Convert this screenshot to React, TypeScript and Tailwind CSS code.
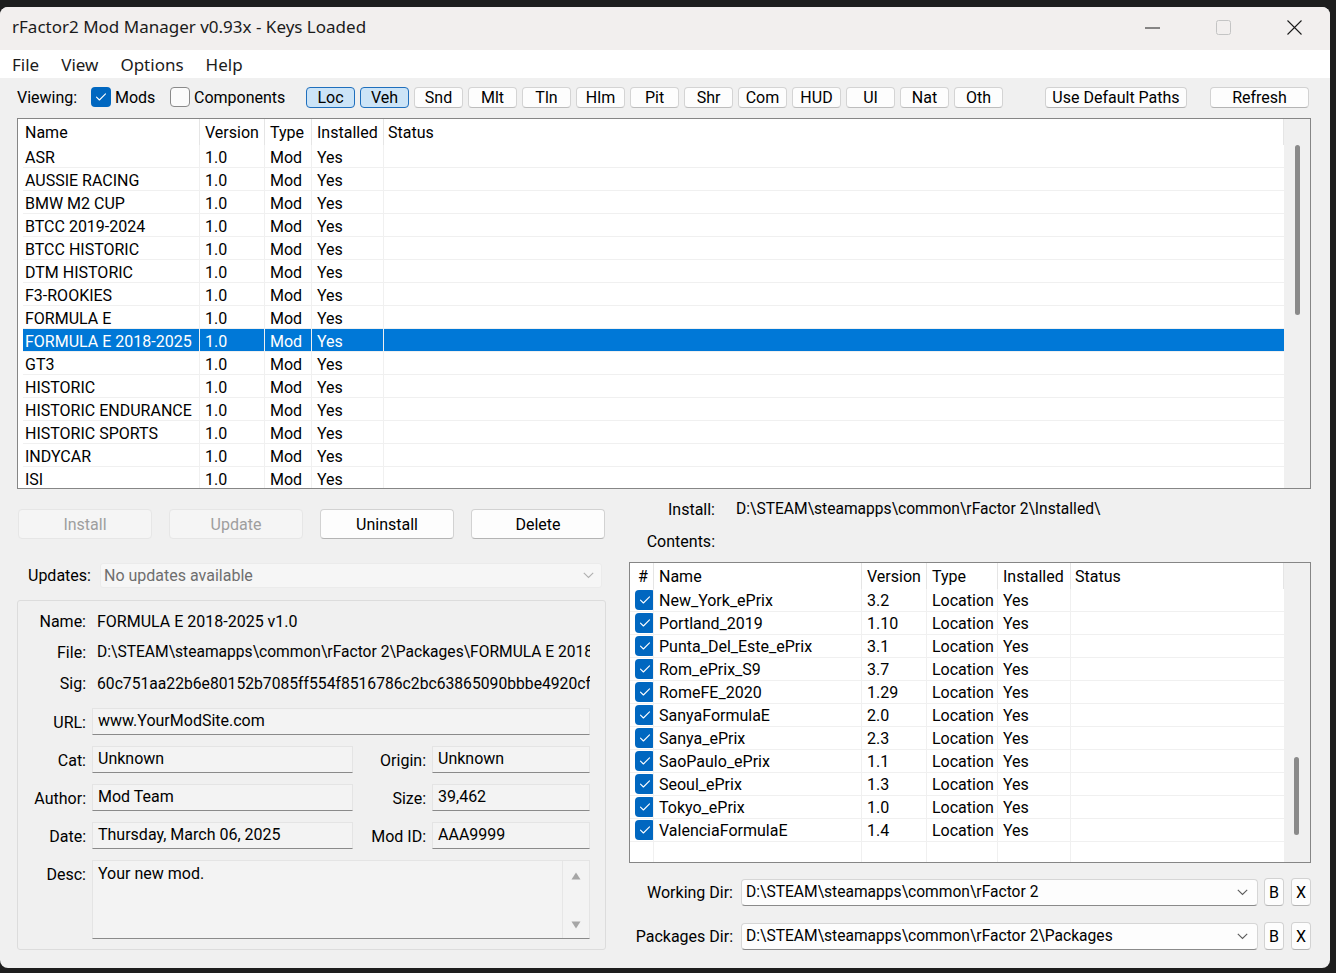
import React from "react";

const mods = [
  "ASR",
  "AUSSIE RACING",
  "BMW M2 CUP",
  "BTCC 2019-2024",
  "BTCC HISTORIC",
  "DTM HISTORIC",
  "F3-ROOKIES",
  "FORMULA E",
  "FORMULA E 2018-2025",
  "GT3",
  "HISTORIC",
  "HISTORIC ENDURANCE",
  "HISTORIC SPORTS",
  "INDYCAR",
  "ISI",
];
const selectedMod = "FORMULA E 2018-2025";

const contents: [string, string][] = [
  ["New_York_ePrix", "3.2"],
  ["Portland_2019", "1.10"],
  ["Punta_Del_Este_ePrix", "3.1"],
  ["Rom_ePrix_S9", "3.7"],
  ["RomeFE_2020", "1.29"],
  ["SanyaFormulaE", "2.0"],
  ["Sanya_ePrix", "2.3"],
  ["SaoPaulo_ePrix", "1.1"],
  ["Seoul_ePrix", "1.3"],
  ["Tokyo_ePrix", "1.0"],
  ["ValenciaFormulaE", "1.4"],
];

const filters = ["Loc", "Veh", "Snd", "Mlt", "Tln", "Hlm", "Pit", "Shr", "Com", "HUD", "UI", "Nat", "Oth"];
const activeFilters = ["Loc", "Veh"];

function Check({ size = 20 }: { size?: number }) {
  return (
    <span
      className="flex shrink-0 items-center justify-center rounded-[4px] bg-[#0067c0]"
      style={{ width: size, height: size }}
    >
      <svg width="12" height="10" viewBox="0 0 12 10" fill="none">
        <path d="M1.5 5.2 4.4 8 10.5 1.8" stroke="white" strokeWidth="1.1" strokeLinecap="round" strokeLinejoin="round" />
      </svg>
    </span>
  );
}

function Chevron({ color = "#5c5c5c" }: { color?: string }) {
  return (
    <svg width="11" height="7" viewBox="0 0 11 7" fill="none">
      <path d="M0.8 0.8 5.5 5.5 10.2 0.8" stroke={color} strokeWidth="1.1" />
    </svg>
  );
}

function Button({ label, disabled, className = "" }: { label: string; disabled?: boolean; className?: string }) {
  return (
    <div
      className={`flex items-center justify-center rounded-[4px] border pt-[2px] ${
        disabled
          ? "border-[#e6e6e6] bg-[#f5f5f5] text-[#9e9e9e]"
          : "border-[#d2d2d2] border-b-[#b4b4b4] bg-[#fdfdfd] text-black"
      } ${className}`}
    >
      {label}
    </div>
  );
}

function Field({ value, className = "" }: { value: string; className?: string }) {
  return (
    <div
      className={`flex h-[27px] shrink-0 items-center border border-[#e4e4e4] border-b-[#8a8a8a] bg-[#f3f3f3] pb-[1px] pl-[5px] ${className}`}
    >
      {value}
    </div>
  );
}

function TitleBar() {
  return (
    <div className="flex h-[43px] shrink-0 items-center bg-[#f2efee]">
      <span className="pb-[3px] pl-[12px] font-['Noto_Sans',sans-serif] text-[17px] text-[#1b1b1b]">
        rFactor2 Mod Manager v0.93x - Keys Loaded
      </span>
      <div className="ml-auto flex h-full pb-[2px]">
        <div className="flex w-[71px] items-center justify-center">
          <svg width="15" height="2" viewBox="0 0 15 2">
            <path d="M0 1h15" stroke="#1b1b1b" strokeWidth="1" />
          </svg>
        </div>
        <div className="flex w-[71px] items-center justify-center">
          <svg width="15" height="15" viewBox="0 0 15 15" fill="none">
            <rect x="0.5" y="0.5" width="14" height="14" rx="2" stroke="#c4c4c4" />
          </svg>
        </div>
        <div className="flex w-[71px] items-center justify-center">
          <svg width="15" height="15" viewBox="0 0 15 15" fill="none">
            <path d="M0.5 0.5 14.5 14.5M14.5 0.5 0.5 14.5" stroke="#1b1b1b" strokeWidth="1.1" />
          </svg>
        </div>
      </div>
    </div>
  );
}

function MenuBar() {
  return (
    <div className="flex h-[28px] shrink-0 items-center gap-[22px] bg-white pl-[12px] pt-[2px] font-['Noto_Sans',sans-serif] text-[17px] text-[#1b1b1b]">
      <span>File</span>
      <span>View</span>
      <span>Options</span>
      <span>Help</span>
    </div>
  );
}

function Toolbar() {
  return (
    <div className="flex h-[22px] items-center">
      <span className="w-[74px] pt-[2px]">Viewing:</span>
      <div className="flex w-[79px] items-center gap-[4px]">
        <Check />
        <span className="pt-[2px]">Mods</span>
      </div>
      <div className="flex w-[136px] items-center gap-[4px]">
        <span className="h-[20px] w-[20px] shrink-0 rounded-[4px] border border-[#8a8a8a] bg-[#fbfbfb]" />
        <span className="pt-[2px]">Components</span>
      </div>
      <div className="flex gap-[5px]">
        {filters.map((f) => (
          <div
            key={f}
            className={`flex h-[21px] w-[49px] items-center justify-center rounded-[4px] border pt-[2px] ${
              activeFilters.includes(f)
                ? "border-[#1f6fbd] bg-[#cce4f7]"
                : "border-[#d4d4d4] border-b-[#bdbdbd] bg-[#fdfdfd]"
            }`}
          >
            {f}
          </div>
        ))}
      </div>
      <Button label="Use Default Paths" className="ml-[42px] h-[21px] w-[142px]" />
      <Button label="Refresh" className="ml-[23px] h-[21px] w-[99px]" />
    </div>
  );
}

function ModTable() {
  const cell = "flex items-center pt-[3px]";
  return (
    <div className="mt-[10px] flex h-[371px] shrink-0 border border-[#868686] bg-white">
      <div className="flex min-w-0 flex-1 flex-col overflow-hidden">
        <div className="flex h-[26px] shrink-0 pl-[5px]">
          <div className="flex w-[176px] items-center pl-[2px] pt-[2px]">Name</div>
          <div className="flex w-[65px] items-center border-l border-[#e5e5e5] pl-[5px] pt-[2px]">Version</div>
          <div className="flex w-[47px] items-center border-l border-[#e5e5e5] pl-[5px] pt-[2px]">Type</div>
          <div className="flex w-[72px] items-center border-l border-[#e5e5e5] pl-[5px] pt-[2px]">Installed</div>
          <div className="flex flex-1 items-center border-x border-[#e5e5e5] pl-[4px] pt-[2px]">Status</div>
        </div>
        {mods.map((m) => {
          const sel = m === selectedMod;
          return (
            <div key={m} className="flex h-[23px] shrink-0 pl-[5px]">
              <div
                className={`flex flex-1 border-b border-[#f0f0f0] ${sel ? "bg-[#0078d7] text-white" : ""}`}
              >
                <div className={`${cell} w-[176px] whitespace-nowrap pl-[2px]`}>{m}</div>
                <div className={`${cell} w-[65px] border-l border-[#f0f0f0] pl-[5px]`}>1.0</div>
                <div className={`${cell} w-[47px] border-l border-[#f0f0f0] pl-[5px]`}>Mod</div>
                <div className={`${cell} w-[72px] border-l border-[#f0f0f0] pl-[5px]`}>Yes</div>
                <div className="flex-1 border-l border-[#f0f0f0]" />
              </div>
            </div>
          );
        })}
      </div>
      <div className="w-[26px] shrink-0 bg-[#f0f0f0] pt-[26px]">
        <div className="ml-[11px] h-[170px] w-[5px] rounded-full bg-[#8a8a8a]" />
      </div>
    </div>
  );
}

function DetailsBox() {
  const line = "flex h-[31px] items-center";
  const label = "w-[68px] shrink-0 text-right pt-[2px]";
  return (
    <div className="mt-[12px] flex h-[350px] flex-col rounded-[3px] border border-[#dcdcdc] pt-[4px]">
      <div className={line}>
        <span className={label}>Name:</span>
        <span className="ml-[11px] whitespace-nowrap pt-[2px]">FORMULA E 2018-2025 v1.0</span>
      </div>
      <div className={line}>
        <span className={label}>File:</span>
        <span className="ml-[11px] w-[493px] overflow-hidden whitespace-nowrap pt-[2px] text-[15.6px]">
          D:\STEAM\steamapps\common\rFactor 2\Packages\FORMULA E 2018-2025_v1.0.rfcmp
        </span>
      </div>
      <div className={line}>
        <span className={label}>Sig:</span>
        <span className="ml-[11px] w-[493px] overflow-hidden whitespace-nowrap pt-[2px] text-[15.7px]">
          60c751aa22b6e80152b7085ff554f8516786c2bc63865090bbbe4920cf7a1d
        </span>
      </div>

      <div className="mt-[10px] flex items-center">
        <span className={label}>URL:</span>
        <Field value="www.YourModSite.com" className="ml-[6px] w-[498px]" />
      </div>
      <div className="mt-[11px] flex items-center">
        <span className={label}>Cat:</span>
        <Field value="Unknown" className="ml-[6px] w-[261px]" />
        <span className="w-[73px] shrink-0 pt-[2px] text-right">Origin:</span>
        <Field value="Unknown" className="ml-[6px] w-[158px]" />
      </div>
      <div className="mt-[11px] flex items-center">
        <span className={label}>Author:</span>
        <Field value="Mod Team" className="ml-[6px] w-[261px]" />
        <span className="w-[73px] shrink-0 pt-[2px] text-right">Size:</span>
        <Field value="39,462" className="ml-[6px] w-[158px]" />
      </div>
      <div className="mt-[11px] flex items-center">
        <span className={label}>Date:</span>
        <Field value="Thursday, March 06, 2025" className="ml-[6px] w-[261px]" />
        <span className="w-[73px] shrink-0 pt-[2px] text-right">Mod ID:</span>
        <Field value="AAA9999" className="ml-[6px] w-[158px]" />
      </div>
      <div className="mt-[11px] flex items-start">
        <span className={`${label} pt-[3px]`}>Desc:</span>
        <div className="ml-[6px] flex h-[79px] w-[498px] border border-[#e4e4e4] border-b-[#8a8a8a] bg-[#f3f3f3]">
          <span className="flex-1 pl-[5px] pt-[1px]">Your new mod.</span>
          <div className="flex w-[27px] flex-col items-center justify-between border-l border-[#e6e6e6] pb-[9px] pt-[11px]">
            <svg width="10" height="8" viewBox="0 0 10 8">
              <path d="M5 0.5 9.5 7.5H0.5Z" fill="#a6a6a6" />
            </svg>
            <svg width="10" height="8" viewBox="0 0 10 8">
              <path d="M0.5 0.5H9.5L5 7.5Z" fill="#a6a6a6" />
            </svg>
          </div>
        </div>
      </div>
    </div>
  );
}

function LeftPane() {
  return (
    <div className="mt-[20px] flex w-[589px] shrink-0 flex-col">
      <div className="ml-[1px] flex h-[30px] gap-[17px]">
        <Button label="Install" disabled className="w-[134px]" />
        <Button label="Update" disabled className="w-[134px]" />
        <Button label="Uninstall" className="w-[134px]" />
        <Button label="Delete" className="w-[134px]" />
      </div>
      <div className="mt-[24px] flex h-[25px] items-center">
        <span className="w-[83px] pl-[11px]">Updates:</span>
        <div className="flex h-[25px] w-[502px] items-center justify-between rounded-[3px] border border-[#ebebeb] bg-[#f6f6f6] pl-[3px] pr-[7px] text-[#6e6e6e]">
          <span>No updates available</span>
          <Chevron color="#b0b0b0" />
        </div>
      </div>
      <DetailsBox />
    </div>
  );
}

function ContentsTable() {
  const cols = "flex items-center border-l pt-[2px]";
  return (
    <div className="mt-[11px] flex h-[301px] border border-[#868686] bg-white">
      <div className="flex min-w-0 flex-1 flex-col overflow-hidden">
        <div className="flex h-[26px] shrink-0">
          <div className="flex w-[23px] items-center pl-[8px] pt-[2px]">#</div>
          <div className={`${cols} w-[208px] border-[#e5e5e5] pl-[5px]`}>Name</div>
          <div className={`${cols} w-[65px] border-[#e5e5e5] pl-[5px]`}>Version</div>
          <div className={`${cols} w-[71px] border-[#e5e5e5] pl-[5px]`}>Type</div>
          <div className={`${cols} w-[73px] border-[#e5e5e5] pl-[5px]`}>Installed</div>
          <div className="flex flex-1 items-center border-x border-[#e5e5e5] pl-[4px] pt-[2px]">Status</div>
        </div>
        {contents.map(([name, ver]) => (
          <div key={name} className="flex h-[23px] shrink-0 border-b border-[#f0f0f0]">
            <div className="flex w-[23px] items-center overflow-hidden pl-[5px]">
              <Check />
            </div>
            <div className={`${cols} w-[208px] border-[#f0f0f0] pl-[5px]`}>{name}</div>
            <div className={`${cols} w-[65px] border-[#f0f0f0] pl-[5px]`}>{ver}</div>
            <div className={`${cols} w-[71px] border-[#f0f0f0] pl-[5px]`}>Location</div>
            <div className={`${cols} w-[73px] border-[#f0f0f0] pl-[5px]`}>Yes</div>
            <div className="flex-1 border-l border-[#f0f0f0]" />
          </div>
        ))}
        <div className="flex flex-1">
          <div className="w-[23px]" />
          <div className="w-[208px] border-l border-[#f0f0f0]" />
          <div className="w-[65px] border-l border-[#f0f0f0]" />
          <div className="w-[71px] border-l border-[#f0f0f0]" />
          <div className="w-[73px] border-l border-[#f0f0f0]" />
          <div className="flex-1 border-l border-[#f0f0f0]" />
        </div>
      </div>
      <div className="w-[26px] shrink-0 bg-[#f0f0f0] pt-[194px]">
        <div className="ml-[10px] h-[78px] w-[5px] rounded-full bg-[#8a8a8a]" />
      </div>
    </div>
  );
}

function DirRow({ label, value, className = "" }: { label: string; value: string; className?: string }) {
  return (
    <div className={`flex h-[28px] items-center ${className}`}>
      <span className="w-[104px] shrink-0 pt-[2px] text-right">{label}</span>
      <div className="ml-[8px] flex h-[27px] w-[517px] items-center justify-between rounded-[4px] border border-[#d6d6d6] border-b-[#8a8a8a] bg-[#fdfdfd] pl-[4px] pr-[9px]">
        <span className="whitespace-nowrap pt-[2px] text-[15.6px]">{value}</span>
        <Chevron />
      </div>
      <Button label="B" className="ml-[6px] h-[28px] w-[20px]" />
      <Button label="X" className="ml-[7px] h-[28px] w-[20px]" />
    </div>
  );
}

function RightPane() {
  return (
    <div className="ml-[23px] mt-[10px] flex min-w-0 flex-1 flex-col">
      <div className="flex h-[20px] items-center">
        <span className="w-[86px] pt-[2px] text-right">Install:</span>
        <span className="ml-[21px] whitespace-nowrap pt-[2px] text-[15.6px]">
          D:\STEAM\steamapps\common\rFactor 2\Installed\
        </span>
      </div>
      <div className="mt-[12px] flex h-[20px] items-center">
        <span className="w-[86px] pt-[2px] text-right">Contents:</span>
      </div>
      <ContentsTable />
      <DirRow label="Working Dir:" value="D:\STEAM\steamapps\common\rFactor 2" className="mt-[15px]" />
      <DirRow label="Packages Dir:" value="D:\STEAM\steamapps\common\rFactor 2\Packages" className="mt-[16px]" />
    </div>
  );
}

export default function App() {
  return (
    <div className="h-[973px] w-[1336px] overflow-hidden bg-[#1e1e1e]">
      <div className="mt-[7px] flex h-[961px] w-[1330px] flex-col overflow-hidden rounded-[8px] bg-[#f0f0f0]">
        <TitleBar />
        <MenuBar />
        <div className="flex flex-1 flex-col pl-[17px] pr-[19px] pt-[8px] font-['Roboto',Arial,sans-serif] text-[16px] text-black">
          <Toolbar />
          <ModTable />
          <div className="flex items-start">
            <LeftPane />
            <RightPane />
          </div>
        </div>
      </div>
    </div>
  );
}
